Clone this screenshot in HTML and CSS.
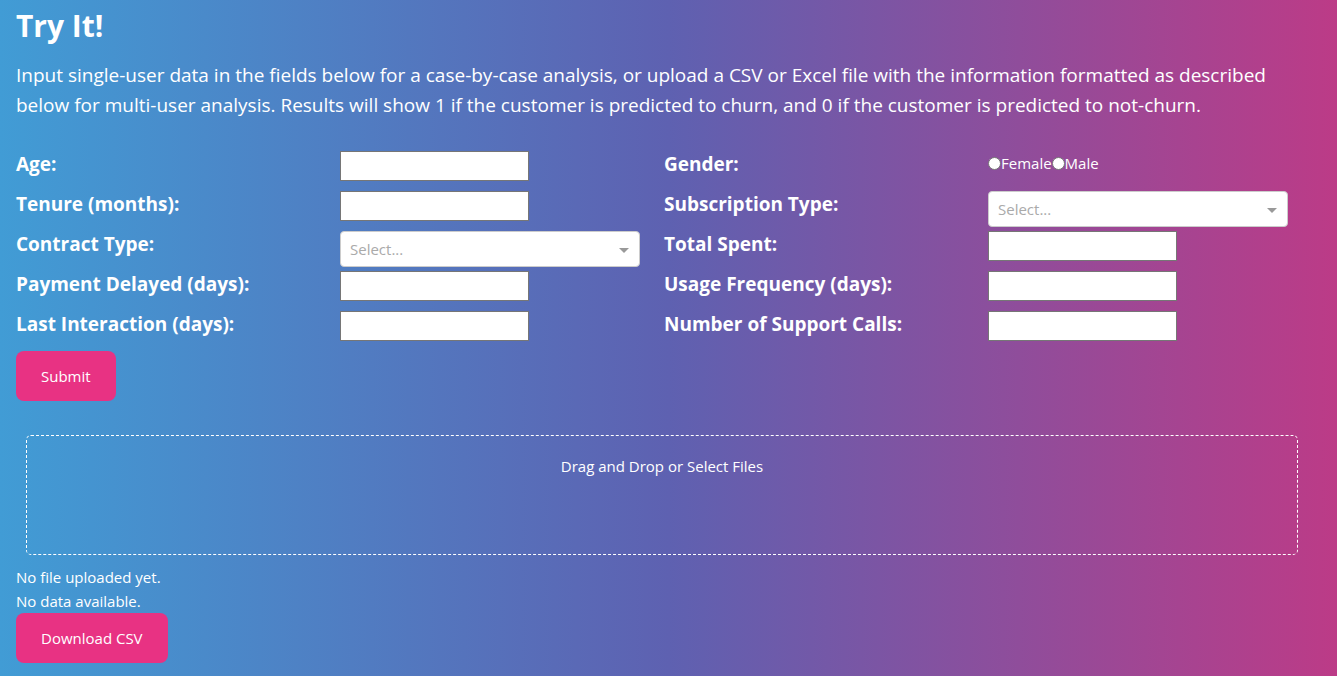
FILE: index.html
```html
<!DOCTYPE html>
<html lang="en">
<head>
<meta charset="utf-8">
<title>Customer Churn – Try It!</title>
<link rel="stylesheet" href="styles.css">
</head>
<body>
<main class="page">
  <h1 class="title">Try It!</h1>
  <p class="intro">Input single-user data in the fields below for a case-by-case analysis, or upload a CSV or Excel file with the information formatted as described below for multi-user analysis. Results will show 1 if the customer is predicted to churn, and 0 if the customer is predicted to not-churn.</p>
  <form class="form">
    <div class="fields">
      <label class="label" for="age">Age:</label>
      <input class="text" id="age" type="text">
      <span class="label" id="gender">Gender:</span>
      <div class="radios" role="radiogroup" aria-labelledby="gender">
        <input class="radio" type="radio" name="gender" id="female"><label for="female">Female</label>
        <input class="radio" type="radio" name="gender" id="male"><label for="male">Male</label>
      </div>
      <label class="label" for="tenure">Tenure (months):</label>
      <input class="text" id="tenure" type="text">
      <label class="label" for="subscription">Subscription Type:</label>
      <div class="dropdown">
        <select class="select" id="subscription"><option>Select...</option></select>
        <svg class="arrow" viewBox="0 0 10 5" aria-hidden="true"><path d="M0 0h10L5 5z"/></svg>
      </div>
      <label class="label" for="contract">Contract Type:</label>
      <div class="dropdown">
        <select class="select" id="contract"><option>Select...</option></select>
        <svg class="arrow" viewBox="0 0 10 5" aria-hidden="true"><path d="M0 0h10L5 5z"/></svg>
      </div>
      <label class="label" for="spent">Total Spent:</label>
      <input class="text" id="spent" type="text">
      <label class="label" for="delayed">Payment Delayed (days):</label>
      <input class="text" id="delayed" type="text">
      <label class="label" for="usage">Usage Frequency (days):</label>
      <input class="text" id="usage" type="text">
      <label class="label" for="interaction">Last Interaction (days):</label>
      <input class="text" id="interaction" type="text">
      <label class="label" for="calls">Number of Support Calls:</label>
      <input class="text" id="calls" type="text">
    </div>
    <button class="button" type="button">Submit</button>
  </form>
  <div class="upload">
    <button class="dropzone" type="button">Drag and Drop or Select Files</button>
  </div>
  <p class="status">No file uploaded yet.</p>
  <p class="status">No data available.</p>
  <button class="button" type="button">Download CSV</button>
</main>
</body>
</html>
```
FILE: styles.css
```css
* {
  box-sizing: border-box;
}

body {
  margin: 0;
  min-height: 100vh;
  background: linear-gradient(to right, #419cd5, #5e61b1 50%, #bc3b87);
  color: #fff;
  font: 15px/24px "Segoe UI", "Open Sans", "Noto Sans", sans-serif;
}

.page {
  padding: 8px 49px 12px 16px;
}

.title {
  margin: 0 0 16px;
  font-size: 30px;
  line-height: 36px;
  font-weight: 700;
}

.intro {
  margin: 0 0 31px;
  font-size: 19px;
  line-height: 30px;
}

.fields {
  display: grid;
  grid-template-columns: repeat(4, minmax(0, 1fr));
  grid-auto-rows: 40px;
  column-gap: 24px;
  align-items: start;
}

.label {
  font-size: 19px;
  line-height: 26px;
  font-weight: 700;
}

.text {
  width: 189px;
  max-width: 100%;
  height: 30px;
  padding: 1px 4px;
  border: 1px solid #767676;
  border-radius: 0;
  background: #fff;
  font: inherit;
}

.radios {
  display: flex;
  align-items: center;
}

.radio {
  appearance: none;
  width: 13px;
  height: 13px;
  margin: 0;
  border: 1px solid #767676;
  border-radius: 50%;
  background: #fff;
}

.radio:checked {
  background: #767676;
  box-shadow: inset 0 0 0 2px #fff;
}

.dropdown {
  position: relative;
}

.select {
  appearance: none;
  display: block;
  width: 100%;
  height: 36px;
  padding: 0 24px 0 9px;
  border: 1px solid #ccc;
  border-radius: 4px;
  background: #fff;
  color: #aaa;
  font: inherit;
}

.arrow {
  position: absolute;
  top: 17px;
  right: 11px;
  width: 10px;
  height: 5px;
  fill: #999;
  pointer-events: none;
}

.button {
  display: block;
  height: 50px;
  padding: 0 25px;
  border: 0;
  border-radius: 8px;
  background: #e83283;
  color: #fff;
  font: inherit;
}

.upload {
  display: flex;
  margin: 34px -10px 10px 10px;
}

.dropzone {
  display: flex;
  flex: 1;
  justify-content: center;
  height: 120px;
  padding: 18px 0 0;
  border: 1px dashed #fff;
  border-radius: 5px;
  background: none;
  color: #fff;
  font: inherit;
}

.status {
  margin: 0;
}
```
